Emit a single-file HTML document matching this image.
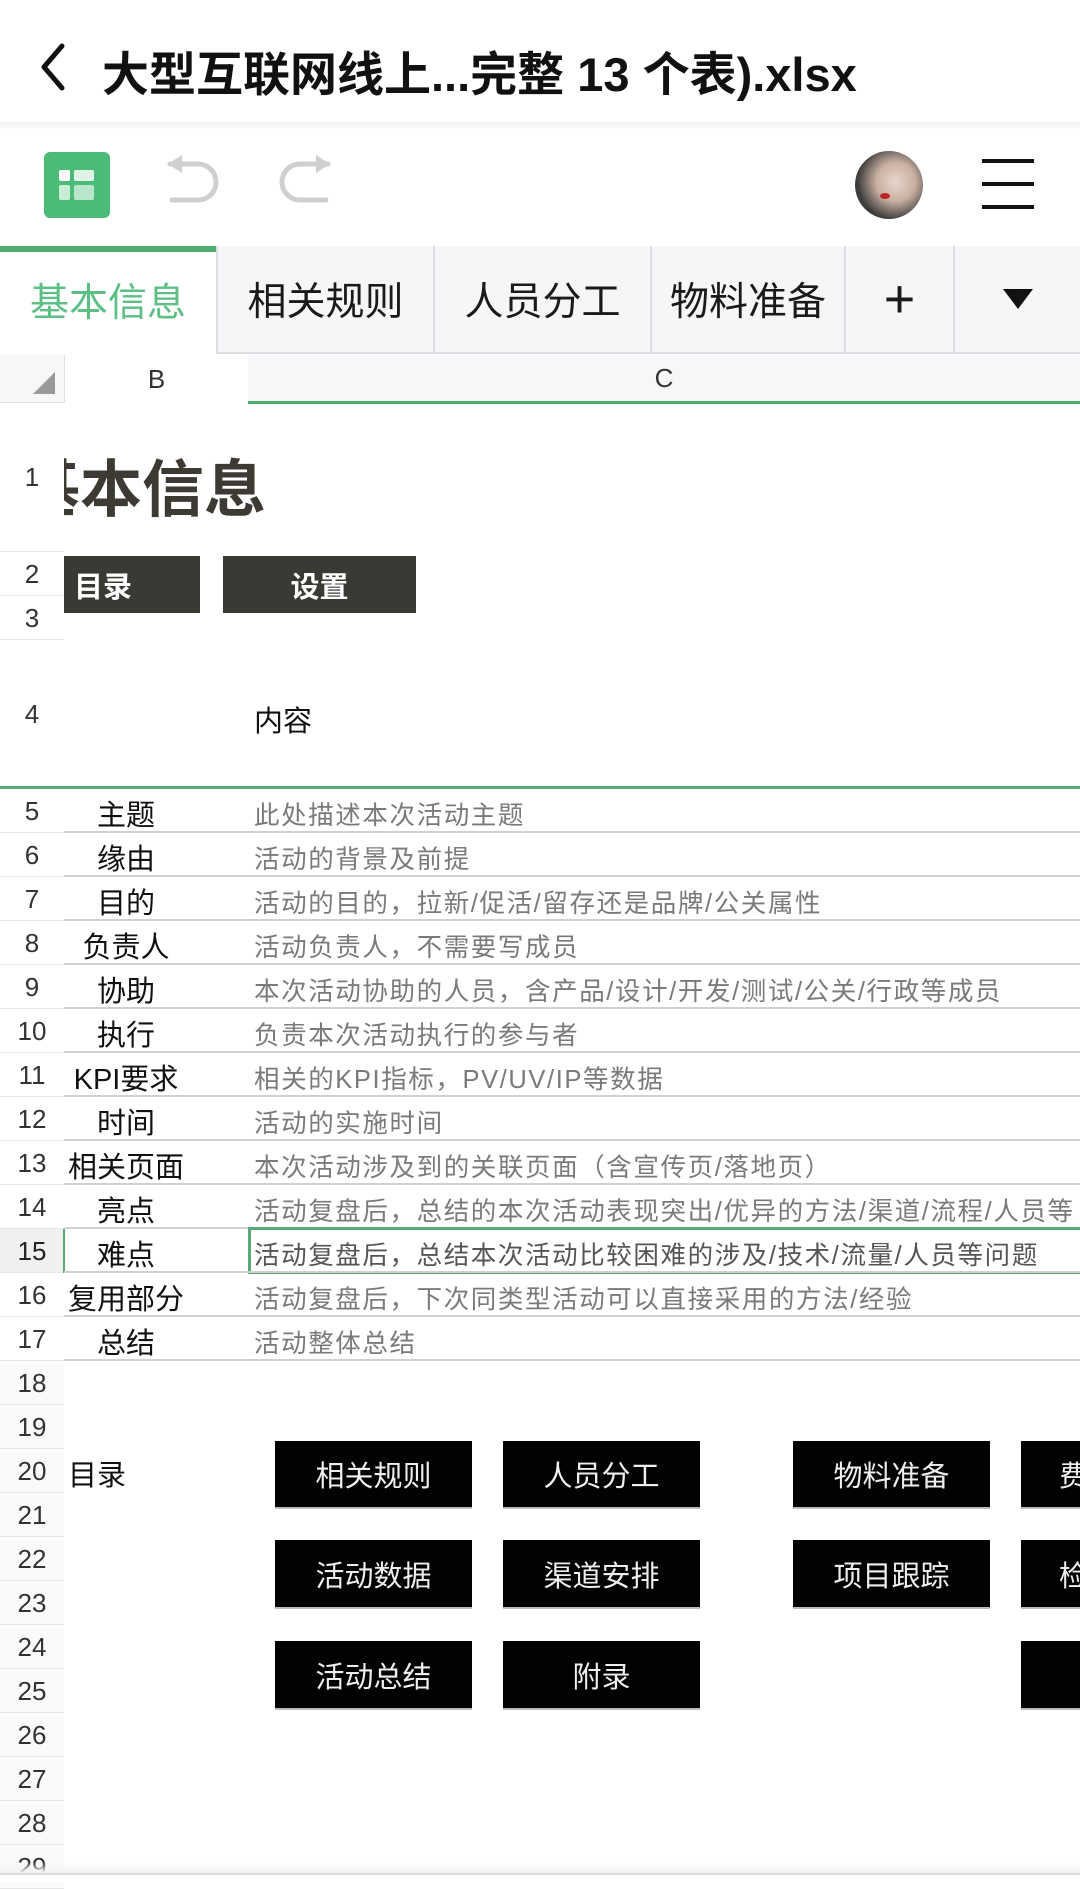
<!DOCTYPE html>
<html><head><meta charset="utf-8"><style>
*{margin:0;padding:0;box-sizing:border-box}
body{width:1080px;height:1882px;position:relative;overflow:hidden;background:#fff;font-family:"Liberation Sans","Noto Sans CJK SC",sans-serif;color:#111}
.a{position:absolute}
.tab{position:absolute;top:246px;height:108px;background:#f5f6f8;border-right:2px solid #dcdde0;border-bottom:2px solid #dcdde0;font-size:39px;display:flex;align-items:center;justify-content:center;color:#1a1a1a}
.rn{position:absolute;left:0;width:64px;text-align:center;font-size:26px;color:#333;background:#fff;border-bottom:1px solid #e6e6e6}
.g{background:#fafafa}
.lbl{position:absolute;left:64px;width:124px;text-align:center;font-size:29px;color:#111;white-space:nowrap}
.ct{position:absolute;left:254px;font-size:25.5px;color:#7a7a7a;white-space:nowrap;letter-spacing:1.6px}
.hl{position:absolute;left:64px;right:0;height:2px;background:#d0d0d0}
.bk{position:absolute;background:#020202;color:#eee;font-size:29px;display:flex;align-items:center;justify-content:center;box-shadow:0 2px 0 #bbb}
.dk{position:absolute;background:#3b3933;color:#fff;font-size:29px;display:flex;align-items:center;font-weight:bold}
</style></head><body>
<svg class="a" style="left:36px;top:42px" width="32" height="50" viewBox="0 0 32 50"><path d="M26 4 L8 25 L26 46" fill="none" stroke="#111" stroke-width="5" stroke-linecap="round" stroke-linejoin="round"/></svg>
<div class="a" style="left:102px;top:36px;font-size:47px;font-weight:bold;color:#111;white-space:nowrap;letter-spacing:0">大型互联网线上...完整 13 个表).xlsx</div>
<div class="a" style="left:0;top:122px;width:1080px;height:8px;background:linear-gradient(#f0f0f0,#fff)"></div>
<div class="a" style="left:44px;top:152px;width:66px;height:66px;border-radius:6px;background:#4dbb78"></div>
<div class="a" style="left:59px;top:170px;width:11px;height:11px;border-radius:2px;background:#fff"></div>
<div class="a" style="left:74px;top:170px;width:20px;height:11px;border-radius:2px;background:#e0f4e8"></div>
<div class="a" style="left:59px;top:185px;width:11px;height:15px;border-radius:2px;background:#c8ecd6"></div>
<div class="a" style="left:74px;top:185px;width:20px;height:15px;border-radius:2px;background:#b8e6ca"></div>
<svg class="a" style="left:160px;top:152px" width="70" height="62" viewBox="0 0 70 62"><path d="M10 12 H38 A18 18 0 0 1 38 48 H12" fill="none" stroke="#cfcfcf" stroke-width="5" stroke-linecap="round"/><path d="M8 12 L22 3 L22 21 Z" fill="#cfcfcf"/></svg>
<svg class="a" style="left:270px;top:152px" width="70" height="62" viewBox="0 0 70 62"><path d="M58 12 H30 A18 18 0 0 0 30 48 H56" fill="none" stroke="#cfcfcf" stroke-width="5" stroke-linecap="round"/><path d="M60 12 L46 3 L46 21 Z" fill="#cfcfcf"/></svg>
<div class="a" style="left:855px;top:151px;width:68px;height:68px;border-radius:50%;background:radial-gradient(circle at 60% 45%,#e8d6cc 0,#c9b0a2 35%,#3a3a3a 70%,#777 100%)"></div>
<div class="a" style="left:880px;top:193px;width:10px;height:6px;border-radius:50%;background:#b22"></div>
<div class="a" style="left:982px;top:159px;width:52px;height:4px;background:#111"></div>
<div class="a" style="left:982px;top:182px;width:52px;height:4px;background:#111"></div>
<div class="a" style="left:982px;top:205px;width:52px;height:4px;background:#111"></div>
<div class="tab" style="left:0;width:218px;background:#fff;color:#5cbf85;border-bottom:none"><div class="a" style="left:0;top:0;width:216px;height:6px;background:#4caf6c"></div>基本信息</div>
<div class="tab" style="left:218px;width:217px">相关规则</div>
<div class="tab" style="left:435px;width:217px">人员分工</div>
<div class="tab" style="left:652px;width:194px">物料准备</div>
<div class="tab" style="left:846px;width:109px;font-size:54px">+</div>
<div class="tab" style="left:955px;width:125px;border-right:none"><svg width="30" height="20"><path d="M0 0H30L15 20Z" fill="#111"/></svg></div>
<div class="a" style="left:0;top:355px;width:1080px;height:48px;background:#f6f7f9;border-bottom:1px solid #e0e0e0"></div>
<div class="a" style="left:64px;top:355px;width:184px;height:48px;background:#fff;border-left:1px solid #e0e0e0;font-size:26px;color:#333;text-align:center;line-height:48px">B</div>
<svg class="a" style="left:33px;top:372px" width="22" height="22"><path d="M22 0V22H0Z" fill="#999"/></svg>
<div class="a" style="left:248px;top:355px;width:832px;height:48px;font-size:26px;color:#333;text-align:center;line-height:46px">C</div>
<div class="a" style="left:248px;top:401px;width:832px;height:3px;background:#4caf6c"></div>
<div class="a" style="left:63px;top:403px;width:1px;height:1470px;background:#e6e6e6"></div>
<div class="rn" style="top:403px;height:149px;line-height:149px">1</div>
<div class="a" style="left:64px;top:403px;width:400px;height:149px;overflow:hidden"><div class="a" style="left:-46px;top:36px;font-size:62px;font-weight:bold;color:#3d3a33;white-space:nowrap">基本信息</div></div>
<div class="rn" style="top:552px;height:44px;line-height:44px">2</div>
<div class="rn" style="top:596px;height:44px;line-height:44px">3</div>
<div class="dk" style="left:64px;top:556px;width:136px;height:57px;padding-left:10px">目录</div>
<div class="dk" style="left:223px;top:556px;width:193px;height:57px;justify-content:center">设置</div>
<div class="rn" style="top:640px;height:148px;line-height:148px">4</div>
<div class="a" style="left:254px;top:698px;font-size:29px;color:#111">内容</div>
<div class="a" style="left:0;top:786px;width:1080px;height:3px;background:#5aa87a"></div>
<div class="rn" style="top:789px;height:44px;line-height:44px">5</div><div class="lbl" style="top:792px">主题</div><div class="ct" style="top:795px">此处描述本次活动主题</div><div class="hl" style="top:831px"></div>
<div class="rn" style="top:833px;height:44px;line-height:44px">6</div><div class="lbl" style="top:836px">缘由</div><div class="ct" style="top:839px">活动的背景及前提</div><div class="hl" style="top:875px"></div>
<div class="rn" style="top:877px;height:44px;line-height:44px">7</div><div class="lbl" style="top:880px">目的</div><div class="ct" style="top:883px">活动的目的，拉新/促活/留存还是品牌/公关属性</div><div class="hl" style="top:919px"></div>
<div class="rn" style="top:921px;height:44px;line-height:44px">8</div><div class="lbl" style="top:924px">负责人</div><div class="ct" style="top:927px">活动负责人，不需要写成员</div><div class="hl" style="top:963px"></div>
<div class="rn" style="top:965px;height:44px;line-height:44px">9</div><div class="lbl" style="top:968px">协助</div><div class="ct" style="top:971px">本次活动协助的人员，含产品/设计/开发/测试/公关/行政等成员</div><div class="hl" style="top:1007px"></div>
<div class="rn" style="top:1009px;height:44px;line-height:44px">10</div><div class="lbl" style="top:1012px">执行</div><div class="ct" style="top:1015px">负责本次活动执行的参与者</div><div class="hl" style="top:1051px"></div>
<div class="rn" style="top:1053px;height:44px;line-height:44px">11</div><div class="lbl" style="top:1056px">KPI要求</div><div class="ct" style="top:1059px">相关的KPI指标，PV/UV/IP等数据</div><div class="hl" style="top:1095px"></div>
<div class="rn" style="top:1097px;height:44px;line-height:44px">12</div><div class="lbl" style="top:1100px">时间</div><div class="ct" style="top:1103px">活动的实施时间</div><div class="hl" style="top:1139px"></div>
<div class="rn" style="top:1141px;height:44px;line-height:44px">13</div><div class="lbl" style="top:1144px">相关页面</div><div class="ct" style="top:1147px">本次活动涉及到的关联页面（含宣传页/落地页）</div><div class="hl" style="top:1183px"></div>
<div class="rn" style="top:1185px;height:44px;line-height:44px">14</div><div class="lbl" style="top:1188px">亮点</div><div class="ct" style="top:1191px">活动复盘后，总结的本次活动表现突出/优异的方法/渠道/流程/人员等</div><div class="hl" style="top:1227px"></div>
<div class="rn" style="top:1229px;height:44px;line-height:44px;background:#f0f0f0;color:#222">15</div><div class="a" style="left:63px;top:1229px;width:2px;height:44px;background:#5aa87a"></div><div class="lbl" style="top:1232px">难点</div>
<div class="a" style="left:248px;top:1227px;width:840px;height:47px;border:3px solid #5aa87a"></div><div class="ct" style="top:1235px;color:#555">活动复盘后，总结本次活动比较困难的涉及/技术/流量/人员等问题</div><div class="hl" style="top:1271px"></div>
<div class="rn" style="top:1273px;height:44px;line-height:44px">16</div><div class="lbl" style="top:1276px">复用部分</div><div class="ct" style="top:1279px">活动复盘后，下次同类型活动可以直接采用的方法/经验</div><div class="hl" style="top:1315px"></div>
<div class="rn" style="top:1317px;height:44px;line-height:44px">17</div><div class="lbl" style="top:1320px">总结</div><div class="ct" style="top:1323px">活动整体总结</div><div class="hl" style="top:1359px"></div>
<div class="rn g" style="top:1361px;height:44px;line-height:44px">18</div>
<div class="rn g" style="top:1405px;height:44px;line-height:44px">19</div>
<div class="rn g" style="top:1449px;height:44px;line-height:44px">20</div>
<div class="rn g" style="top:1493px;height:44px;line-height:44px">21</div>
<div class="rn g" style="top:1537px;height:44px;line-height:44px">22</div>
<div class="rn g" style="top:1581px;height:44px;line-height:44px">23</div>
<div class="rn g" style="top:1625px;height:44px;line-height:44px">24</div>
<div class="rn g" style="top:1669px;height:44px;line-height:44px">25</div>
<div class="rn g" style="top:1713px;height:44px;line-height:44px">26</div>
<div class="rn g" style="top:1757px;height:44px;line-height:44px">27</div>
<div class="rn g" style="top:1801px;height:44px;line-height:44px">28</div>
<div class="rn g" style="top:1845px;height:44px;line-height:44px">29</div>
<div class="a" style="left:68px;top:1452px;font-size:29px">目录</div>
<div class="bk" style="left:275px;top:1441px;width:197px;height:66px">相关规则</div>
<div class="bk" style="left:503px;top:1441px;width:197px;height:66px">人员分工</div>
<div class="bk" style="left:793px;top:1441px;width:197px;height:66px">物料准备</div>
<div class="bk" style="left:1021px;top:1441px;width:80px;height:66px;justify-content:flex-start;padding-left:38px">费</div>
<div class="bk" style="left:275px;top:1540px;width:197px;height:67px">活动数据</div>
<div class="bk" style="left:503px;top:1540px;width:197px;height:67px">渠道安排</div>
<div class="bk" style="left:793px;top:1540px;width:197px;height:67px">项目跟踪</div>
<div class="bk" style="left:1021px;top:1540px;width:80px;height:67px;justify-content:flex-start;padding-left:38px">检</div>
<div class="bk" style="left:275px;top:1641px;width:197px;height:67px">活动总结</div>
<div class="bk" style="left:503px;top:1641px;width:197px;height:67px">附录</div>
<div class="bk" style="left:1021px;top:1641px;width:80px;height:67px"></div>
<div class="a" style="left:0;top:1862px;width:1080px;height:11px;background:linear-gradient(rgba(255,255,255,0),#f2f2f2)"></div>
<div class="a" style="left:0;top:1873px;width:1080px;height:9px;background:#fff;border-top:2px solid #ddd"></div>
</body></html>
